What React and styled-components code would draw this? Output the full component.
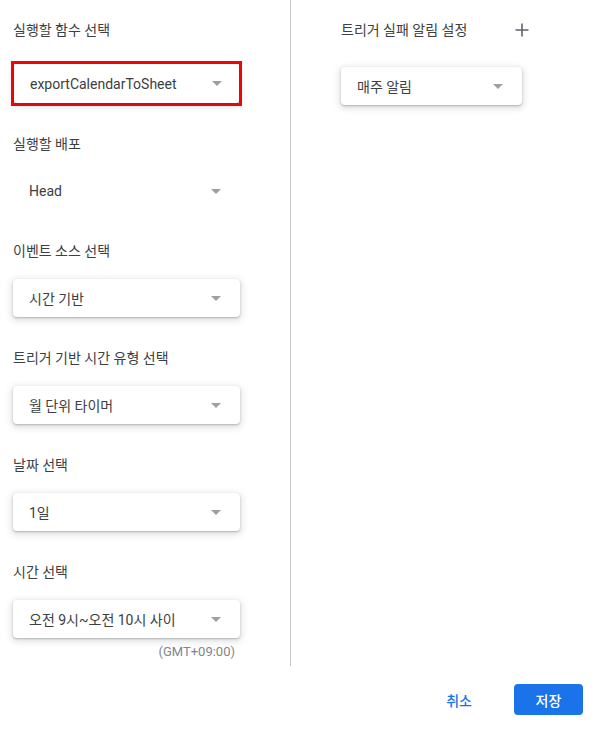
import React from "react";
import styled, {createGlobalStyle} from "styled-components";

const COLORS = {
  text: "#3c4043",
  muted: "#80868b",
  arrow: "#9aa0a6",
  divider: "#c4c7cb",
  blue: "#1a73e8",
  icon: "#5f6368",
};

const GlobalStyle = createGlobalStyle`
body {
margin: 0;
background: white;
font-family: Roboto, "Noto Sans CJK KR", sans-serif;
}
`;

const Dialog = styled.div`
width: 601px;
height: 730px;
display: flex;
flex-direction: column;
`;

const Columns = styled.div`
display: flex;
height: 666px;
`;

const LeftCol = styled.div`
width: 277px;
padding: 20px 0 0 13px;
border-right: 1px solid ${COLORS.divider};
display: flex;
flex-direction: column;
gap: 31px;
`;

const RightCol = styled.div`
flex: 1;
padding: 20px 0 0 50px;
`;

const Field = styled.div`
display: flex;
flex-direction: column;
align-items: flex-start;
gap: ${(p) => p.$gap || 18}px;
`;

const Label = styled.div`
font-size: 14px;
line-height: 20px;
color: ${COLORS.text};
`;

const Highlight = styled.div`
border: 3px solid #ff0000;
margin: 0 0 -3px -2px;
`;

const Select = styled.div`
box-sizing: border-box;
width: ${(p) => p.$width || 227}px;
height: ${(p) => p.$height || 38}px;
display: flex;
align-items: center;
justify-content: space-between;
padding: 0 ${(p) => p.$padRight || 19}px 0 16px;
font-size: 14px;
color: ${COLORS.text};
background: white;
border-radius: 4px;
box-shadow: ${(p) => p.$flat ? "none" : "0 1px 2px rgba(60,64,67,.3), 0 2px 6px 2px rgba(60,64,67,.15)"};
`;

const Arrow = styled.span`
width: 0;
height: 0;
border-left: 5px solid transparent;
border-right: 5px solid transparent;
border-top: 5px solid ${COLORS.arrow};
`;

const Hint = styled.div`
width: 222px;
margin-top: -25px;
text-align: right;
font-size: 13px;
color: ${COLORS.muted};
`;

const HeaderRow = styled.div`
width: 188px;
display: flex;
align-items: center;
justify-content: space-between;
margin-bottom: 27px;
`;

const PlusButton = styled.svg`
width: 14px;
height: 14px;
`;

const Footer = styled.div`
display: flex;
justify-content: flex-end;
align-items: center;
padding: 18px 18px 0 0;
gap: 26px;
`;

const TextButton = styled.button`
background: transparent;
border: none;
color: ${COLORS.blue};
font-family: inherit;
font-size: 14px;
font-weight: 500;
padding: 0 16px;
height: 31px;
cursor: pointer;
`;

const PrimaryButton = styled.button`
background: ${COLORS.blue};
border: none;
border-radius: 4px;
color: white;
font-family: inherit;
font-size: 14px;
font-weight: 500;
width: 69px;
height: 31px;
cursor: pointer;
`;

const Dropdown = (props) => (
  <Select {...props}>
    <span>{props.value}</span>
    <Arrow />
  </Select>
);

const App = () => {
  return (
    <Dialog>
      <GlobalStyle />
      <Columns>
        <LeftCol>
          <Field $gap={21}>
            <Label>실행할 함수 선택</Label>
            <Highlight>
              <Dropdown $width={225} $height={39} $padRight={17} value="exportCalendarToSheet" />
            </Highlight>
          </Field>
          <Field>
            <Label>실행할 배포</Label>
            <Dropdown $flat value="Head" />
          </Field>
          <Field>
            <Label>이벤트 소스 선택</Label>
            <Dropdown value="시간 기반" />
          </Field>
          <Field>
            <Label>트리거 기반 시간 유형 선택</Label>
            <Dropdown value="월 단위 타이머" />
          </Field>
          <Field>
            <Label>날짜 선택</Label>
            <Dropdown value="1일" />
          </Field>
          <Field>
            <Label>시간 선택</Label>
            <Dropdown value="오전 9시~오전 10시 사이" />
          </Field>
          <Hint>(GMT+09:00)</Hint>
        </LeftCol>
        <RightCol>
          <HeaderRow>
            <Label>트리거 실패 알림 설정</Label>
            <PlusButton viewBox="0 0 14 14">
              <path d="M7 0.5v13M0.5 7h13" stroke={COLORS.icon} strokeWidth="1.6" fill="none" />
            </PlusButton>
          </HeaderRow>
          <Dropdown $width={181} value="매주 알림" />
        </RightCol>
      </Columns>
      <Footer>
        <TextButton>취소</TextButton>
        <PrimaryButton>저장</PrimaryButton>
      </Footer>
    </Dialog>
  );
};

export default App;
